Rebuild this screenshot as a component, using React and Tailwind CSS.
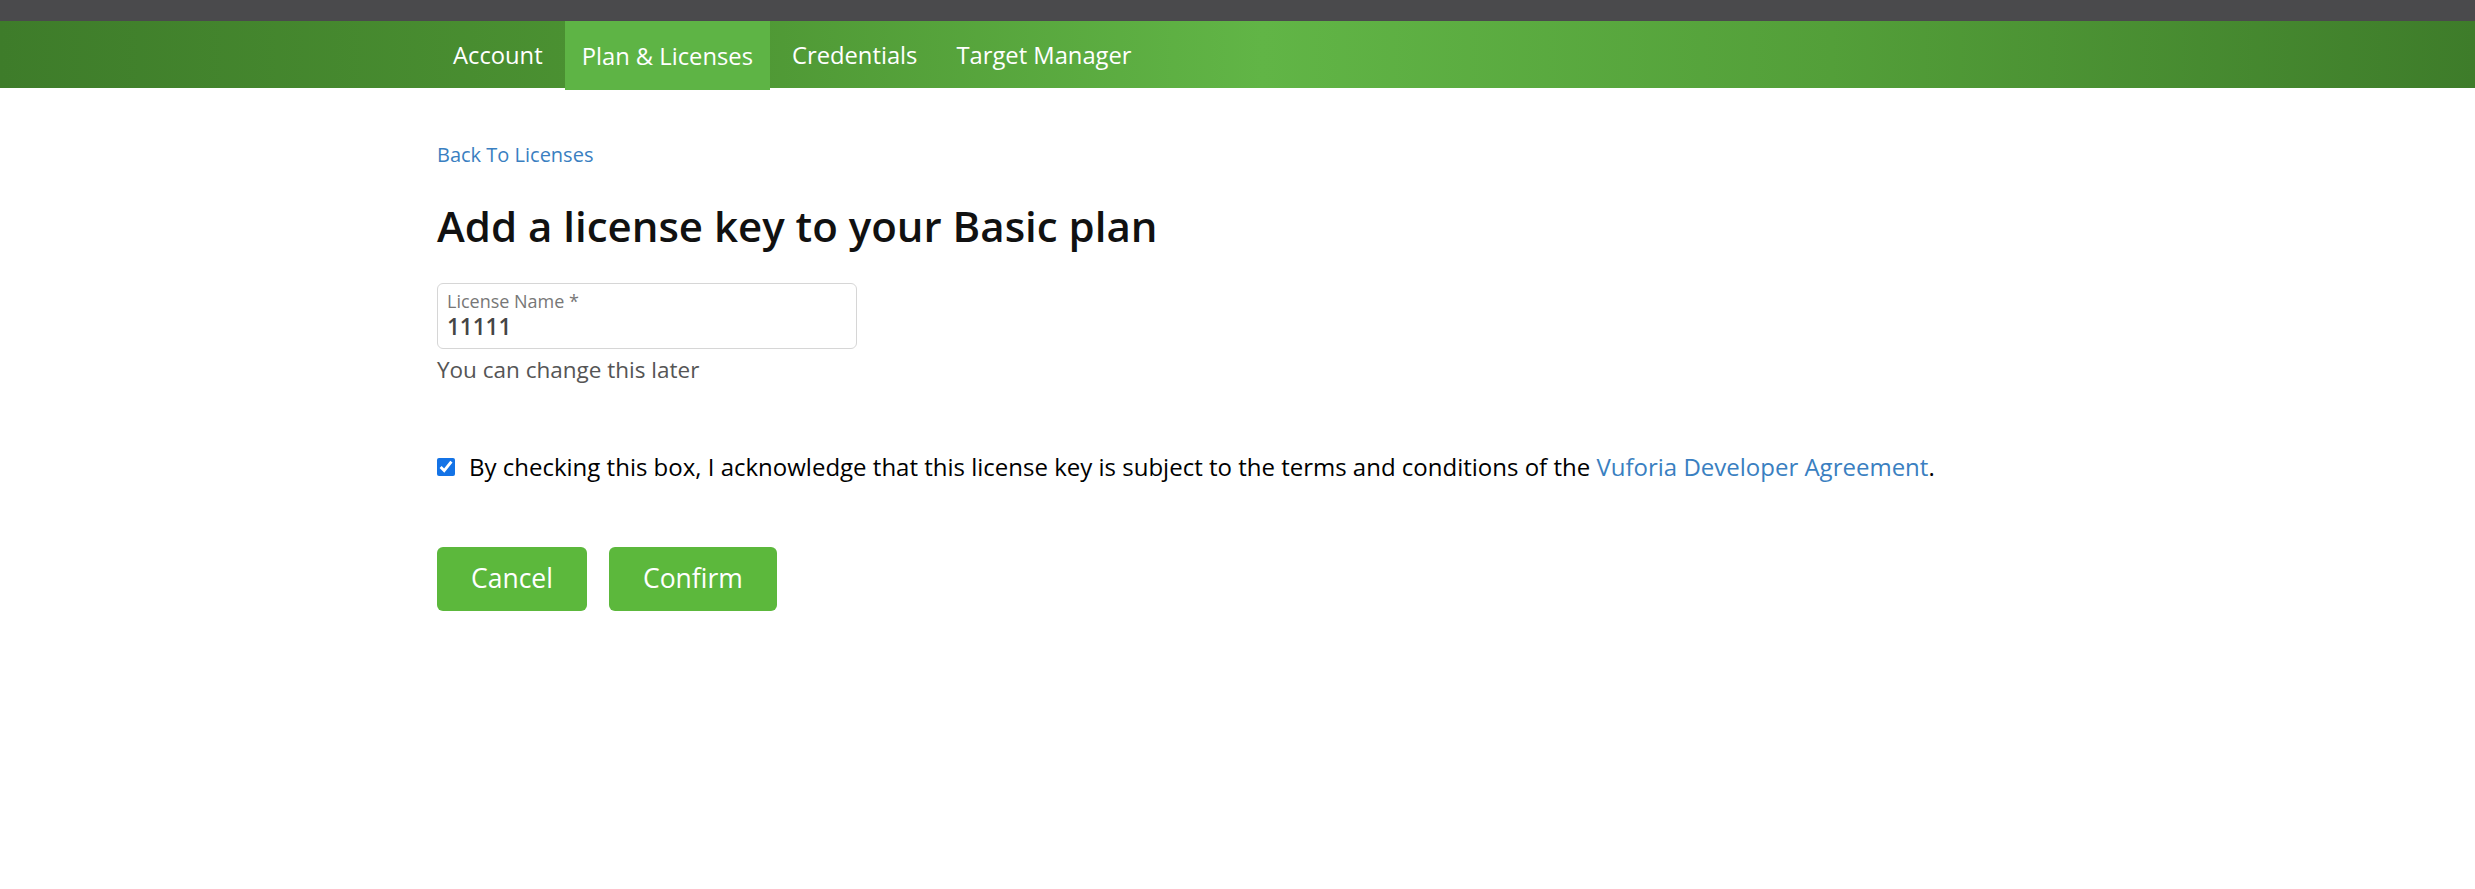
import React from "react";

export default function App() {
  const tabs = ["Account", "Plan & Licenses", "Credentials", "Target Manager"];
  return (
    <div
      className="min-h-[889px] w-full bg-white"
      style={{ fontFamily: '"Open Sans", "Noto Sans", sans-serif' }}
    >
      <div className="h-[21px] bg-[#4a4a4c]" />
      <nav className="h-[67px] bg-[linear-gradient(to_right,#3e7c2a_0%,#4d9533_28%,#61b546_51%,#539f39_74%,#3e7c2a_100%)]">
        <div className="flex h-full gap-[5px] pl-[436px]">
          {tabs.map((t) => (
            <div
              key={t}
              className={
                t === "Plan & Licenses"
                  ? "relative z-10 flex h-[69px] items-center bg-[#5eb445] px-[17px] pt-[2px] text-[23.75px] text-white"
                  : "flex h-full items-center px-[17px] pt-[2px] text-[23.75px] text-white"
              }
            >
              {t}
            </div>
          ))}
        </div>
      </nav>
      <main className="pl-[437px] pt-[52px]">
        <a className="block text-[20px] leading-[1.5] text-[#3a7fc1]" href="#">
          Back To Licenses
        </a>
        <h1 className="mt-[31px] text-[42px] font-semibold leading-[1.2] text-[#111]">
          Add a license key to your Basic plan
        </h1>
        <div className="mt-[32px] h-[66px] w-[420px] rounded-[6px] border border-[#d6d6d6] px-[9px] pt-[7px]">
          <div className="text-[18px] leading-[1.2] text-[#777]">License Name *</div>
          <div className="text-[22.5px] font-semibold leading-[1.2] text-[#454545]">11111</div>
        </div>
        <div className="mt-[4px] text-[22.5px] leading-[1.5] text-[#555]">
          You can change this later
        </div>
        <div className="mt-[62px] flex items-center text-[24px] leading-[1.5] text-black">
          <input
            type="checkbox"
            checked
            readOnly
            className="m-0 mr-[14px] h-[18px] w-[18px] accent-[#1473e6]"
          />
          <span>
            By checking this box, I acknowledge that this license key is subject to the terms
            and conditions of the{" "}
            <a href="#" className="text-[#3a7fc1]">
              Vuforia Developer Agreement
            </a>
            .
          </span>
        </div>
        <div className="mt-[62px] flex gap-[22px]">
          <button className="flex h-[64px] items-center rounded-[6px] bg-[#5cb83c] px-[34px] text-[26.5px] text-white">
            Cancel
          </button>
          <button className="flex h-[64px] items-center rounded-[6px] bg-[#5cb83c] px-[34px] text-[26.5px] text-white">
            Confirm
          </button>
        </div>
      </main>
    </div>
  );
}
